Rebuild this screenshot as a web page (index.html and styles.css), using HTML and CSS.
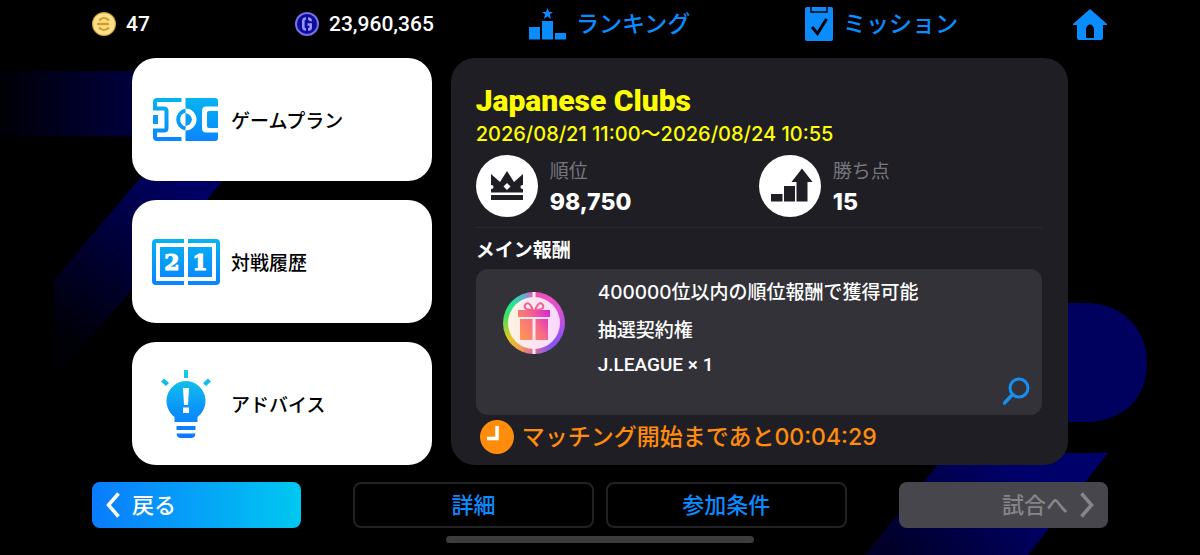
FILE: index.html
```html
<!DOCTYPE html>
<html lang="ja">
<head>
<meta charset="utf-8">
<meta name="viewport" content="width=device-width, initial-scale=1">
<title>Japanese Clubs</title>
<link rel="stylesheet" href="styles.css">
</head>
<body>
<svg class="backdrop" viewBox="0 0 1200 555" preserveAspectRatio="none" aria-hidden="true">
  <defs>
    <linearGradient id="fadeBar" x1="0" x2="1"><stop offset="0" stop-color="#000006"/><stop offset="1" stop-color="#000058"/></linearGradient>
    <linearGradient id="fadeLeft" gradientUnits="userSpaceOnUse" x1="70" y1="345" x2="190" y2="190"><stop offset="0" stop-color="#000006"/><stop offset=".5" stop-color="#000034"/><stop offset="1" stop-color="#000064"/></linearGradient>
    <linearGradient id="fadeRight" gradientUnits="userSpaceOnUse" x1="890" y1="555" x2="1000" y2="455"><stop offset="0" stop-color="#000028"/><stop offset="1" stop-color="#00006a"/></linearGradient>
  </defs>
  <rect y="71" width="200" height="65" fill="url(#fadeBar)"/>
  <path d="M54 280 140 178H225L130 292 62 370H54Z" fill="url(#fadeLeft)"/>
  <path d="M1000 303H1084C1126 303 1147 332 1147 363 1147 398 1124 422 1084 422H1000Z" fill="#00005e"/>
  <path d="M947 453H1108L1028 555H865Z" fill="url(#fadeRight)"/>
</svg>

<div class="screen">
  <header class="topbar">
    <span class="currency">
      <svg width="24" height="24" viewBox="0 0 24 24" aria-hidden="true"><circle cx="12" cy="12" r="12" fill="#d3a743"/><circle cx="12" cy="12" r="10.800" fill="#fbe08a"/><path d="M7 8.500Q12 3.500 17 8.500M7 15.500Q12 20.500 17 15.500" fill="none" stroke="#d2992b" stroke-width="2"/><path d="M5 12H17" stroke="#d2992b" stroke-width="2.400"/></svg>
      47
    </span>
    <span class="currency">
      <svg width="24" height="24" viewBox="0 0 24 24" aria-hidden="true"><circle cx="12" cy="12" r="11" fill="#0b0b9c" stroke="#7770e6" stroke-width="2"/><path d="M11 6.500Q8.300 6.500 8.300 9V15Q8.300 17.500 11 17.500M13 6.500Q15.700 6.500 15.700 9.300M12.500 12.500H15.700V15.500Q15.500 17.500 13 17.500" fill="none" stroke="#9a94ff" stroke-width="2.600"/></svg>
      23,960,365
    </span>
    <a class="toplink" href="#ranking">
      <svg width="37" height="32" viewBox="0 0 37 32" fill="#0a8cff" aria-hidden="true"><path d="M0 19H11V31.500H0ZM13 13H24V31.500H13ZM26 25H37V31.500H26ZM18.500 0 20 4H24L20.800 6.500 22 11 18.500 8.300 15 11 16.200 6.500 13 4H17Z"/></svg>
      <span class="toplabel">ランキング</span>
    </a>
    <a class="toplink" href="#mission">
      <svg width="28" height="34" viewBox="0 0 28 34" aria-hidden="true"><rect width="28" height="34" rx="2" fill="#0a8cff"/><path d="M6 0V5H22V0" fill="none" stroke="#000" stroke-width="1.500"/><path d="M7 20 12.500 26.500 21.500 12" fill="none" stroke="#000" stroke-width="3"/></svg>
      <span class="toplabel">ミッション</span>
    </a>
    <a class="toplink" href="#home" aria-label="ホーム">
      <svg width="34" height="31" viewBox="0 0 34 31" aria-hidden="true"><path d="M17 0 34 15V16H30V29Q30 31 28 31H6Q4 31 4 29V16H0V15Z" fill="#0a8cff"/><path d="M13 29V20Q14 15.500 17 15.500T21 20V29Z" fill="#000"/></svg>
    </a>
  </header>

  <main class="content">
    <nav class="menu">
      <button class="card" type="button">
        <svg class="card-icon" viewBox="-1 0 68 44" aria-hidden="true">
          <defs><linearGradient id="sky" gradientUnits="userSpaceOnUse" x1="0" y1="0" x2="0" y2="44"><stop offset="0" stop-color="#06b4f0"/><stop offset="1" stop-color="#0a84ff"/></linearGradient></defs>
          <path d="M28.500 2H4Q2 2 2 4V10.500H11Q13.500 10.500 13.500 13V30Q13.500 32.500 11 32.500H2V39Q2 41 4 41H28.500M32.500 12.500A9.200 9.200 0 0 0 32.500 30.500" fill="none" stroke="url(#sky)" stroke-width="4"/>
          <path d="M0 17H5V26H0Z" fill="#0a9cf8"/>
          <path d="M32.500 0H62Q65 0 65 3V8.500H53Q49 8.500 49 13V30Q49 34.500 53 34.500H65V40Q65 43 62 43H32.500V32.500A11 11 0 0 0 32.500 10.500ZM65 13V30H56Q54 30 54 28V15Q54 13 56 13ZM32.500 15Q38 16 39 21.500 38 27 32.500 28Z" fill="url(#sky)"/>
        </svg>
        <span>ゲームプラン</span>
      </button>
      <button class="card" type="button">
        <svg class="card-icon" viewBox="0 0 68 46" aria-hidden="true">
          <path d="M32 2H4Q2 2 2 4V42Q2 44 4 44H32M36 2H64Q66 2 66 4V42Q66 44 64 44H36" fill="none" stroke="url(#sky)" stroke-width="4"/>
          <path d="M8 8H32V38H8ZM36 8H60V38H36Z" fill="url(#sky)"/>
          <text class="score" x="20" y="31">2</text><text class="score" x="48" y="31">1</text>
        </svg>
        <span>対戦履歴</span>
      </button>
      <button class="card" type="button">
        <svg class="card-icon" viewBox="-9 0 68 68" aria-hidden="true">
          <defs><linearGradient id="bulb" gradientUnits="userSpaceOnUse" x1="0" y1="0" x2="0" y2="68"><stop offset="0" stop-color="#14cfe4"/><stop offset=".6" stop-color="#0a92fa"/><stop offset="1" stop-color="#0a78ff"/></linearGradient></defs>
          <path d="M23 0H27V8H23ZM0 11.500 3 8.500 8 13 5 16ZM50 11.500 47 8.500 42 13 45 16ZM25 11A20 20 0 0 1 36.500 47V52H13.500V47A20 20 0 0 1 25 11ZM15.500 56H34.500V60H15.500ZM15.500 63.500H34.500Q34 68 30 68H20Q16 68 15.500 63.500Z" fill="url(#bulb)"/>
          <path d="M22 18H28L27 35H23ZM22 37.500H28V43H22Z" fill="#fff"/>
        </svg>
        <span>アドバイス</span>
      </button>
    </nav>

    <section class="panel">
      <h1 class="title">Japanese Clubs</h1>
      <p class="period">2026/08/21 11:00～2026/08/24 10:55</p>
      <div class="stats">
        <div class="stat">
          <svg width="62" height="62" viewBox="0 0 62 62" aria-hidden="true"><circle cx="31" cy="31" r="31" fill="#fff"/><path d="M15 19 24 27 31 16 38 27 47 19V37.500H15ZM15 40H47V45H15Z" fill="#1f1e25"/><path d="M31 28 34.500 31.500 31 35 27.500 31.500Z" fill="#fff"/><circle cx="15.500" cy="32" r="2" fill="#fff"/><circle cx="46.500" cy="32" r="2" fill="#fff"/></svg>
          <dl><dt>順位</dt><dd>98,750</dd></dl>
        </div>
        <div class="stat">
          <svg width="62" height="62" viewBox="0 0 62 62" aria-hidden="true"><circle cx="31" cy="31" r="31" fill="#fff"/><path d="M12 39H23.500V46.500H12ZM25 31H36V46.500H25ZM37.500 46.500V27H32.500L43 13.500 53.500 27H48.500V46.500Z" fill="#1f1e25"/></svg>
          <dl><dt>勝ち点</dt><dd>15</dd></dl>
        </div>
      </div>
      <h2 class="subtitle">メイン報酬</h2>
      <div class="reward">
        <div class="gift">
          <svg width="62" height="62" viewBox="0 0 62 62" aria-hidden="true">
            <defs>
              <linearGradient id="giftFill" gradientUnits="userSpaceOnUse" x1="15" y1="40" x2="47" y2="18"><stop offset="0" stop-color="#ff9654"/><stop offset=".5" stop-color="#f76a88"/><stop offset="1" stop-color="#d420dc"/></linearGradient>
              <linearGradient id="giftBack" x1="0" x2="1"><stop offset="0" stop-color="#fff3e2"/><stop offset="1" stop-color="#f8d8ff"/></linearGradient>
            </defs>
            <circle cx="31" cy="31" r="26" fill="url(#giftBack)"/>
            <path d="M29.500 0H32.500V7H29.500ZM29.500 55H32.500V62H29.500Z" fill="#ffe8f0"/>
            <path d="M15 18H47V25H15ZM17 27H29.500V48H17ZM32.500 27H45V48H32.500Z" fill="url(#giftFill)"/>
            <path d="M30 18Q20 18 22 13 26 8 30 18M32 18Q42 18 40 13 36 8 32 18" fill="none" stroke="#ef6190" stroke-width="2"/>
          </svg>
        </div>
        <div class="reward-text">
          <p>400000位以内の順位報酬で獲得可能</p>
          <p class="item">抽選契約権<br>J.LEAGUE × 1</p>
        </div>
        <button class="search" type="button" aria-label="詳細を見る">
          <svg width="27" height="28" viewBox="0 0 27 28" fill="none" stroke="#178ff0" aria-hidden="true"><circle cx="16" cy="11" r="9" stroke-width="3"/><path d="M9.500 17.500 1.500 26" stroke-width="3.500" stroke-linecap="round"/></svg>
        </button>
      </div>
      <p class="timer">
        <svg width="34" height="34" viewBox="0 0 34 34" aria-hidden="true"><circle cx="17" cy="17" r="17" fill="#ff8c0a"/><path d="M17 6V18.500H7" fill="none" stroke="#fff" stroke-width="3.500"/></svg>
        <span>マッチング開始まであと00:04:29</span>
      </p>
    </section>
  </main>

  <footer class="actions">
    <button class="btn back" type="button">
      <svg width="14" height="26" viewBox="0 0 14 26" fill="none" stroke="currentColor" stroke-width="3.500" aria-hidden="true"><path d="M12.500 1.500 2.500 13 12.500 24.500"/></svg>
      <span class="label">戻る</span>
    </button>
    <div class="options">
      <button class="btn outline" type="button"><span class="label">詳細</span></button>
      <button class="btn outline" type="button"><span class="label">参加条件</span></button>
    </div>
    <button class="btn next" type="button" disabled>
      <span class="label">試合へ</span>
      <svg width="14" height="26" viewBox="0 0 14 26" fill="none" stroke="currentColor" stroke-width="3.500" aria-hidden="true"><path d="M1.500 1.500 11.500 13 1.500 24.500"/></svg>
    </button>
  </footer>
  <div class="home-indicator"></div>
</div>
</body>
</html>
```
FILE: styles.css
```css
* { box-sizing: border-box; }

body {
  margin: 0;
  background: #000;
  color: #fff;
  font-family: Inter, "Noto Sans CJK JP", sans-serif;
  font-size: 19px;
  font-weight: 500;
}

h1, h2, p, dl, dd { margin: 0; }
svg { display: block; flex: none; }
button { border: 0; padding: 0; font: inherit; color: inherit; cursor: pointer; }
a { color: inherit; text-decoration: none; }

.backdrop {
  position: absolute;
  inset: 0;
  width: 100%;
  height: 100%;
  z-index: -1;
}

.screen {
  display: flex;
  flex-direction: column;
  min-height: 100vh;
}

.topbar {
  display: grid;
  grid-template-columns: 203fr 234fr 276fr 268fr 34fr;
  align-items: center;
  min-height: 48px;
  margin-bottom: 10px;
  padding: 0 93px 0 92px;
}

.currency, .toplink {
  display: flex;
  align-items: center;
  gap: 10px;
}

.currency {
  font-family: Roboto, sans-serif;
  font-size: 21px;
}

.toplink {
  color: #0a8cff;
  font-size: 23px;
}

.toplabel, .label { padding-bottom: 4px; }

.content {
  display: grid;
  grid-template-columns: 300fr 618fr;
  gap: 19px;
  padding: 0 132px;
}

.menu {
  display: grid;
  grid-auto-rows: 1fr;
  gap: 19px;
}

.card {
  display: flex;
  align-items: center;
  gap: 11px;
  padding: 0 20px;
  border-radius: 24px;
  background: #fff;
  color: #000;
  text-align: left;
}

.card-icon { width: 68px; }

.score {
  fill: #fff;
  stroke: #fff;
  font: 700 22px "DejaVu Serif", serif;
  text-anchor: middle;
}

.panel {
  padding: 26px 26px 6px 25px;
  border-radius: 24px;
  background: #1f1e25;
}

.title {
  color: #ff0;
  font-family: Roboto, sans-serif;
  font-size: 30px;
  font-weight: 900;
  line-height: 34px;
}

.period {
  color: #ff0;
  font-size: 20px;
  line-height: 32px;
}

.stats {
  display: grid;
  grid-template-columns: 1fr 1fr;
  margin-top: 5px;
  padding-bottom: 10px;
  border-bottom: 1px solid #2b2a31;
}

.stat {
  display: flex;
  align-items: center;
  gap: 12px;
}

.stat dt { color: #77767c; font-weight: 400; line-height: 32px; }
.stat dd { font-size: 23px; font-weight: 800; line-height: 28px; }

.subtitle {
  padding-top: 4px;
  font-size: 19px;
  font-weight: 700;
  line-height: 37px;
}

.reward {
  display: flex;
  min-height: 146px;
  padding: 7px 12px 10px 27px;
  border-radius: 12px;
  background: #333238;
}

.gift {
  width: 62px;
  height: 62px;
  margin: 16px 33px 0 0;
  border-radius: 50%;
  background: conic-gradient(#f050b0, #e050d0 60deg, #a050f0 110deg, #8055f8 145deg, #e07090 185deg, #f0a050 210deg, #e0c820 240deg, #40e060 285deg, #20e890 310deg, #60b0d8 340deg, #f050b0);
}

.reward-text {
  flex: 1;
  line-height: 34px;
}

.item {
  margin-top: 4px;
  font-family: Roboto, "Noto Sans CJK JP", sans-serif;
}

.search {
  align-self: flex-end;
  background: none;
}

.timer {
  display: flex;
  align-items: center;
  gap: 8px;
  padding-left: 4px;
  color: #ff8c0a;
  font-size: 23px;
  line-height: 44px;
}

.actions {
  display: grid;
  grid-template-columns: 209fr 493fr 209fr;
  column-gap: 52px;
  margin-top: 17px;
  padding: 0 92px;
}

.options {
  display: grid;
  grid-template-columns: 1fr 1fr;
  gap: 12px;
}

.btn {
  display: flex;
  align-items: center;
  justify-content: center;
  gap: 12px;
  height: 46px;
  border-radius: 8px;
  font-size: 22px;
}

.back {
  justify-content: flex-start;
  padding: 0 14px;
  background: linear-gradient(90deg, #0a7cff, #00c8f0);
}

.outline {
  border: 2px solid #222225;
  background: #000;
  color: #0a8cff;
}

.next {
  justify-content: flex-end;
  padding: 0 14px;
  background: #47464c;
  color: #86858a;
  cursor: default;
}

.home-indicator {
  width: 26%;
  max-width: 308px;
  height: 7px;
  margin: 8px auto 0;
  border-radius: 4px;
  background: #3c3c3c;
}
```
